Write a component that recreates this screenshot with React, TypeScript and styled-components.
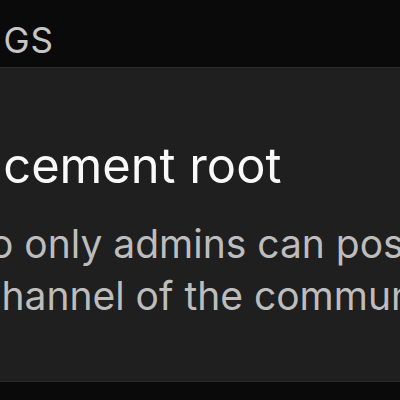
import styled, { createGlobalStyle } from 'styled-components';

const GlobalStyle = createGlobalStyle`
  html, body {
    margin: 0;
    padding: 0;
    background: #0a0a0a;
    overflow: hidden;
  }
  body {
    font-family: Inter, "Noto Sans", "Liberation Sans", sans-serif;
    -webkit-font-smoothing: antialiased;
  }
`;

const lines = ['Set up so only admins can post in the', 'default channel of the community.'];

const App = () => {
  return (
    <>
      <GlobalStyle />
      <Screen>
        <SectionHeader>Settings</SectionHeader>
        <Card>
          <Title>Announcement root</Title>
          <Description>
            {lines.map((line) => (
              <DescriptionLine key={line}>{line}</DescriptionLine>
            ))}
          </Description>
        </Card>
      </Screen>
    </>
  );
};

export default App;

const Screen = styled.div`
  display: flex;
  flex-direction: column;
  width: 900px;
  height: 400px;
  margin-left: -160px;
  background: #0a0a0a;
`;

const SectionHeader = styled.div`
  padding: 23px 0 10px 33px;
  font-size: 35px;
  line-height: 34px;
  letter-spacing: 1px;
  text-transform: uppercase;
  color: #c6c6c6;
  white-space: nowrap;
`;

const Card = styled.div`
  display: flex;
  flex-direction: column;
  background: #1f1f1f;
  border-top: 1px solid #2c2c2c;
  border-bottom: 1px solid #2c2c2c;
  padding: 68px 0 59px 0;
`;

const Title = styled.div`
  margin-left: -15px;
  font-size: 48.8px;
  line-height: 60px;
  color: #f9f9f9;
  white-space: nowrap;
`;

const Description = styled.div`
  display: flex;
  flex-direction: column;
  margin-top: 22px;
  font-size: 39px;
  line-height: 52px;
  color: #bdbdbd;
`;

const DescriptionLine = styled.div`
  white-space: nowrap;
`;
